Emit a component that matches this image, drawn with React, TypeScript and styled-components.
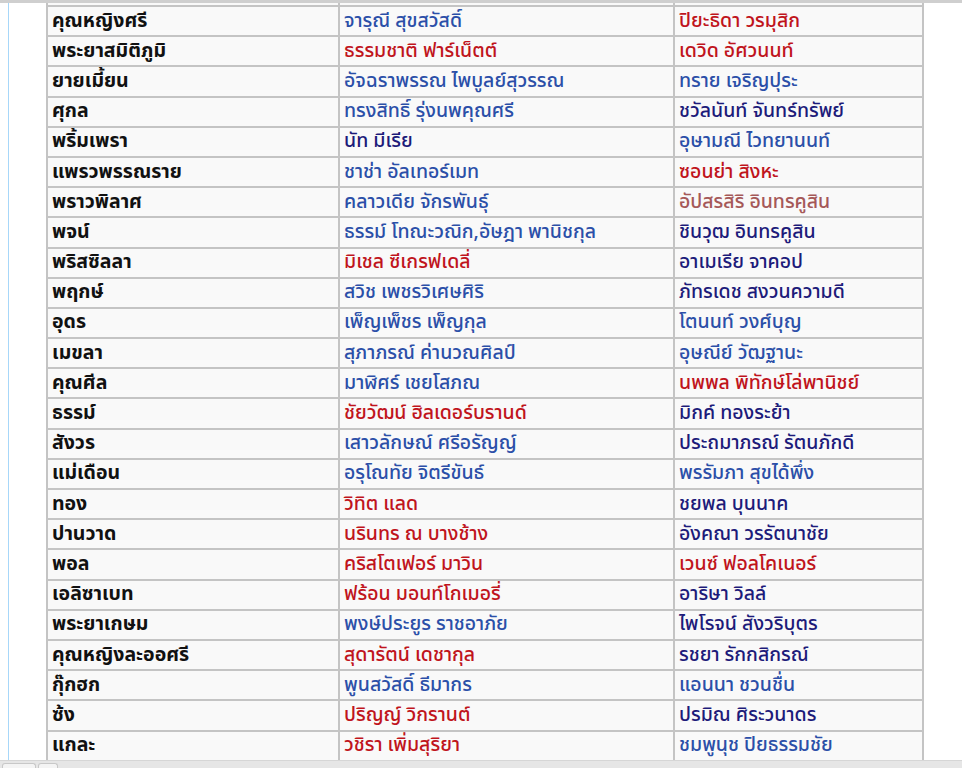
import React from 'react';
import styled, { createGlobalStyle } from 'styled-components';

const GlobalStyle = createGlobalStyle`
  html, body {
    margin: 0;
    padding: 0;
    background: #ffffff;
    overflow: hidden;
  }
  body {
    font-family: Tahoma, "Noto Sans Thai", "Noto Sans", "DejaVu Sans", sans-serif;
  }
`;

type LinkKind = 'blue' | 'visited' | 'red' | 'brown';

const linkColors: Record<LinkKind, string> = {
  blue: '#2b4fa8',
  visited: '#1d1b7a',
  red: '#c0141c',
  brown: '#a55858',
};

const Page = styled.div`
  width: 962px;
  height: 768px;
  display: flex;
  flex-direction: column;
  overflow: hidden;
`;

const Frame = styled.div`
  flex: 1;
  display: flex;
  border-top: 3px solid #cfcfcf;
  overflow: hidden;
`;

const Gutter = styled.div`
  width: 8px;
  flex-shrink: 0;
`;

const Content = styled.div`
  flex: 1;
  border-left: 1px solid #a7d7f9;
  padding-left: 37px;
  overflow: hidden;
`;

const Table = styled.table`
  border-collapse: collapse;
  background: #f9f9f9;
  width: 876px;
  table-layout: fixed;
  font-size: 19.5px;
  line-height: 22px;
`;

const Spacer = styled.tr`
  height: 3px;
  td {
    padding: 0;
    border-top: none;
  }
`;

const Row = styled.tr`
  height: 30.2px;
`;

const Cell = styled.td<{ $bold?: boolean; $color?: string }>`
  border: 2px solid #c4c4c4;
  padding: 2px 5px 3px 4px;
  white-space: nowrap;
  overflow: hidden;
  font-weight: ${p => (p.$bold ? 'bold' : 500)};
  color: ${p => p.$color || '#111111'};
`;

const BottomBar = styled.div`
  height: 7px;
  flex-shrink: 0;
  background: #e6e6e6;
  border-top: 1px solid #d6d6d6;
  display: flex;
  align-items: flex-end;
  gap: 2px;
  padding-left: 2px;
`;

const Tab = styled.div<{ $w: number }>`
  width: ${p => p.$w}px;
  height: 4px;
  border: 1px solid #c8c8c8;
  border-bottom: none;
  border-radius: 3px 3px 0 0;
  background: #f4f4f4;
`;

type Entry = [string, string, LinkKind, string, LinkKind];

const rows: Entry[] = [
  ['คุณหญิงศรี', 'จารุณี สุขสวัสดิ์', 'blue', 'ปิยะธิดา วรมุสิก', 'red'],
  ['พระยาสมิติภูมิ', 'ธรรมชาติ ฟาร์เน็ตต์', 'red', 'เดวิด อัศวนนท์', 'red'],
  ['ยายเมี้ยน', 'อัจฉราพรรณ ไพบูลย์สุวรรณ', 'blue', 'ทราย เจริญปุระ', 'blue'],
  ['ศุกล', 'ทรงสิทธิ์ รุ่งนพคุณศรี', 'blue', 'ชวัลนันท์ จันทร์ทรัพย์', 'visited'],
  ['พริ้มเพรา', 'นัท มีเรีย', 'visited', 'อุษามณี ไวทยานนท์', 'blue'],
  ['แพรวพรรณราย', 'ชาช่า อัลเทอร์เมท', 'blue', 'ซอนย่า สิงหะ', 'red'],
  ['พราวพิลาศ', 'คลาวเดีย จักรพันธุ์', 'blue', 'อัปสรสิริ อินทรคูสิน', 'brown'],
  ['พจน์', 'ธรรม์ โทณะวณิก,อัษฎา พานิชกุล', 'blue', 'ชินวุฒ อินทรคูสิน', 'visited'],
  ['พริสซิลลา', 'มิเชล ซีเกรฟเดลี่', 'red', 'อาเมเรีย จาคอป', 'visited'],
  ['พฤกษ์', 'สวิช เพชรวิเศษศิริ', 'blue', 'ภัทรเดช สงวนความดี', 'visited'],
  ['อุดร', 'เพ็ญเพ็ชร เพ็ญกุล', 'blue', 'โตนนท์ วงศ์บุญ', 'blue'],
  ['เมขลา', 'สุภาภรณ์ ค่านวณศิลป์', 'blue', 'อุษณีย์ วัฒฐานะ', 'blue'],
  ['คุณศีล', 'มาฬิศร์ เชยโสภณ', 'blue', 'นพพล พิทักษ์โล่พานิชย์', 'red'],
  ['ธรรม์', 'ชัยวัฒน์ ฮิลเดอร์บรานด์', 'red', 'มิกค์ ทองระย้า', 'visited'],
  ['สังวร', 'เสาวลักษณ์ ศรีอรัญญ์', 'blue', 'ประถมาภรณ์ รัตนภักดี', 'visited'],
  ['แม่เดือน', 'อรุโณทัย จิตรีขันธ์', 'blue', 'พรรัมภา สุขได้พึ่ง', 'blue'],
  ['ทอง', 'วิทิต แลด', 'red', 'ชยพล บุนนาค', 'visited'],
  ['ปานวาด', 'นรินทร ณ บางช้าง', 'red', 'อังคณา วรรัตนาชัย', 'visited'],
  ['พอล', 'คริสโตเฟอร์ มาวิน', 'red', 'เวนซ์ ฟอลโคเนอร์', 'red'],
  ['เอลิซาเบท', 'ฟร้อน มอนท์โกเมอรี่', 'red', 'อาริษา วิลล์', 'visited'],
  ['พระยาเกษม', 'พงษ์ประยูร ราชอาภัย', 'blue', 'ไพโรจน์ สังวริบุตร', 'visited'],
  ['คุณหญิงละออศรี', 'สุดารัตน์ เดชากุล', 'red', 'รชยา รักกสิกรณ์', 'visited'],
  ['กุ๊กฮก', 'พูนสวัสดิ์ ธีมากร', 'blue', 'แอนนา ชวนชื่น', 'blue'],
  ['ซ้ง', 'ปริญญ์ วิกรานต์', 'red', 'ปรมิณ ศิระวนาดร', 'visited'],
  ['แกละ', 'วชิรา เพิ่มสุริยา', 'red', 'ชมพูนุช ปิยธรรมชัย', 'blue'],
];

const App: React.FC = () => {
  return (
    <Page>
      <GlobalStyle />
      <Frame>
        <Gutter />
        <Content>
          <Table>
            <colgroup>
              <col style={{ width: 292 }} />
              <col style={{ width: 335 }} />
              <col style={{ width: 249 }} />
            </colgroup>
            <tbody>
              <Spacer>
                <Cell />
                <Cell />
                <Cell />
              </Spacer>
              {rows.map(([role, actor, actorKind, actor2, actor2Kind]) => (
                <Row key={role}>
                  <Cell $bold>{role}</Cell>
                  <Cell $color={linkColors[actorKind]}>{actor}</Cell>
                  <Cell $color={linkColors[actor2Kind]}>{actor2}</Cell>
                </Row>
              ))}
            </tbody>
          </Table>
        </Content>
      </Frame>
      <BottomBar>
        <Tab $w={32} />
        <Tab $w={18} />
      </BottomBar>
    </Page>
  );
};

export default App;
